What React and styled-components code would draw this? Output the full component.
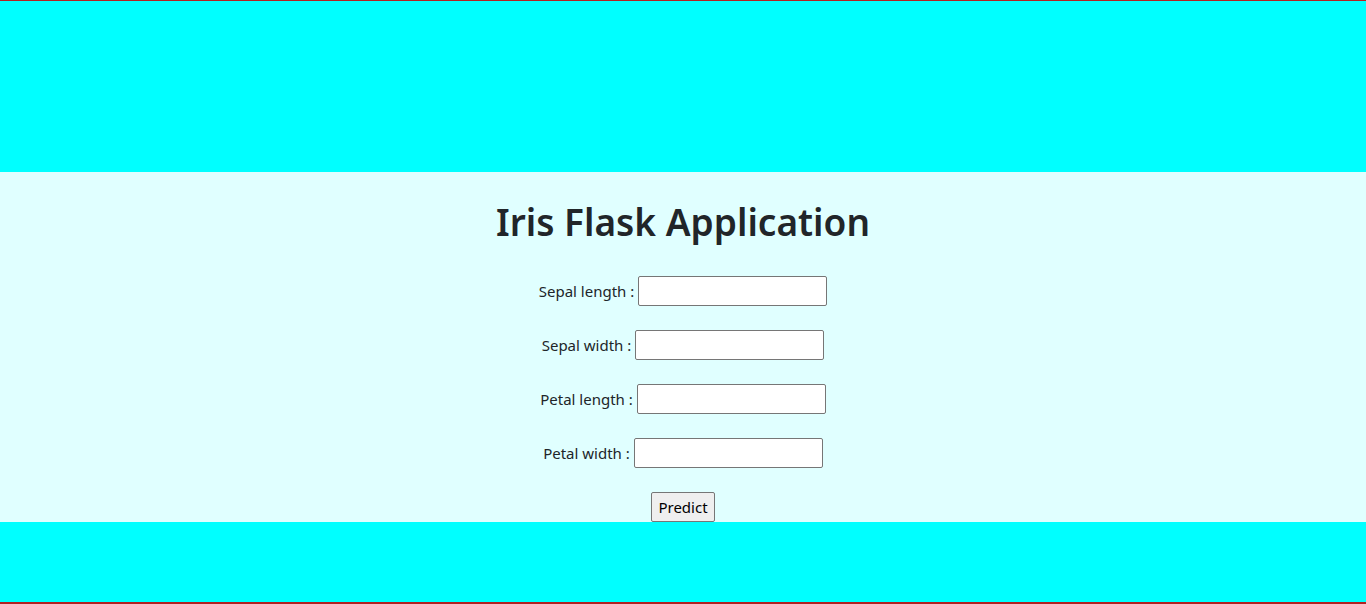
import React from "react";
import styled, { createGlobalStyle } from "styled-components";

const GlobalStyle = createGlobalStyle`
  * { box-sizing: border-box; }
  html, body { margin: 0; padding: 0; }
  body {
    font-family: "Noto Sans", "Open Sans", sans-serif;
    color: #212529;
    background: #00ffff;
  }
`;

const fields = ["Sepal length", "Sepal width", "Petal length", "Petal width"];

const App = () => {
  return (
    <Page>
      <GlobalStyle />
      <TopBand />
      <Main>
        <Title>Iris Flask Application</Title>
        <Form onSubmit={(e) => e.preventDefault()}>
          {fields.map((name) => (
            <Row key={name}>
              <Label>{name} :</Label>
              <Input type="text" />
            </Row>
          ))}
          <Button type="submit">Predict</Button>
        </Form>
      </Main>
    </Page>
  );
};

const Page = styled.div`
  display: flex;
  flex-direction: column;
  min-height: 100vh;
  border-top: 1px solid #b22222;
  border-bottom: 2px solid #b22222;
  background: #00ffff;
`;

const TopBand = styled.header`
  height: 171px;
  background: #00ffff;
`;

const Main = styled.section`
  background: #e0ffff;
  padding-top: 26px;
  display: flex;
  flex-direction: column;
  align-items: center;
`;

const Title = styled.h1`
  margin: 0 0 30px;
  font-size: 37px;
  font-weight: 600;
  line-height: 48px;
`;

const Form = styled.form`
  display: flex;
  flex-direction: column;
  align-items: center;
  gap: 24px;
`;

const Row = styled.div`
  display: flex;
  align-items: center;
  gap: 4px;
`;

const Label = styled.label`
  font-size: 15px;
  line-height: 30px;
`;

const Input = styled.input`
  width: 189px;
  height: 30px;
  border: 1px solid #767676;
  border-radius: 2px;
  background: #fff;
  padding: 1px 2px;
  font-size: 15px;
`;

const Button = styled.button`
  height: 30px;
  padding: 1px 6px;
  font-family: "Noto Sans", "Open Sans", sans-serif;
  font-size: 15px;
  color: #000;
  background: #efefef;
  border: 1px solid #767676;
  border-radius: 2px;
`;

export default App;
